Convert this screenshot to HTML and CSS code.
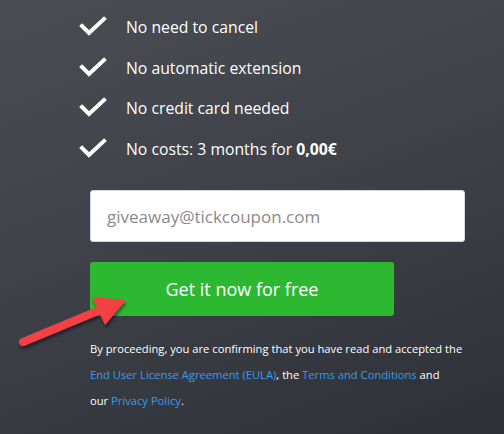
FILE: index.html
```html
<!DOCTYPE html>
<html>
<head>
<meta charset="utf-8">
<link rel="stylesheet" href="styles.css">
</head>
<body>
<div class="page">
  <ul class="benefits">
    <li><svg class="check" viewBox="0 0 28 22" width="28" height="22"><path d="M3 10 L10 17 L25 3" /></svg><span>No need to cancel</span></li>
    <li><svg class="check" viewBox="0 0 28 22" width="28" height="22"><path d="M3 10 L10 17 L25 3" /></svg><span>No automatic extension</span></li>
    <li><svg class="check" viewBox="0 0 28 22" width="28" height="22"><path d="M3 10 L10 17 L25 3" /></svg><span>No credit card needed</span></li>
    <li><svg class="check" viewBox="0 0 28 22" width="28" height="22"><path d="M3 10 L10 17 L25 3" /></svg><span>No costs: 3 months for <b>0,00€</b></span></li>
  </ul>
  <form class="signup">
    <input class="email" type="text" placeholder="giveaway@tickcoupon.com">
    <button class="cta" type="button">Get it now for free</button>
    <p class="legal">By proceeding, you are confirming that you have read and accepted the <a href="#">End User License Agreement (EULA)</a>, the <a href="#">Terms and Conditions</a> and<br>our <a href="#">Privacy Policy</a>.</p>
  </form>
  <svg class="arrow" viewBox="0 0 140 70" width="140" height="70">
    <defs>
      <filter id="sh" x="-20%" y="-20%" width="140%" height="160%">
        <feDropShadow dx="1" dy="3" stdDeviation="1.5" flood-color="#000" flood-opacity="0.45"/>
      </filter>
    </defs>
    <g filter="url(#sh)">
      <line x1="23" y1="62" x2="100" y2="30" stroke="#f24045" stroke-width="8" stroke-linecap="round"/>
      <polygon points="92,17 126,20 105,45" fill="#f24045"/>
    </g>
  </svg>
</div>
</body>
</html>
```
FILE: styles.css
```css
html, body {
  margin: 0;
  padding: 0;
}
body {
  width: 504px;
  height: 434px;
  overflow: hidden;
  background: linear-gradient(160deg, #4a4c52 0%, #3f4249 45%, #2d3036 100%);
  font-family: "Open Sans", "Liberation Sans", sans-serif;
  color: #ffffff;
}
.page {
  position: relative;
  width: 504px;
  height: 434px;
}
.benefits {
  list-style: none;
  margin: 0;
  padding: 7px 0 0 79px;
}
.benefits li {
  display: flex;
  align-items: center;
  height: 40.5px;
  font-size: 15.75px;
}
.benefits li b {
  font-weight: 700;
}
.check {
  flex: none;
  margin-right: 19px;
}
.check path {
  fill: none;
  stroke: #ffffff;
  stroke-width: 4;
  stroke-linecap: square;
}
.signup {
  display: flex;
  flex-direction: column;
  align-items: flex-start;
  padding: 21px 0 0 90px;
}
.email {
  box-sizing: border-box;
  width: 375px;
  height: 52px;
  border: 1px solid #d8d8d8;
  border-radius: 3px;
  background: #ffffff;
  padding: 0 16px;
  font-family: "Open Sans", "Liberation Sans", sans-serif;
  font-size: 17px;
  color: #333;
  outline: none;
}
.email::placeholder {
  color: #8a8a8a;
}
.cta {
  margin-top: 20px;
  width: 304px;
  height: 54px;
  border: none;
  border-radius: 3px;
  background: #2db832;
  color: #ffffff;
  font-family: "Open Sans", "Liberation Sans", sans-serif;
  font-size: 18px;
  cursor: pointer;
}
.legal {
  margin: 20px 0 0 0;
  width: 380px;
  font-size: 11.2px;
  line-height: 26px;
  color: #ffffff;
}
.legal a {
  color: #3a9af0;
  text-decoration: none;
}
.arrow {
  position: absolute;
  left: 0;
  top: 280px;
}
```
